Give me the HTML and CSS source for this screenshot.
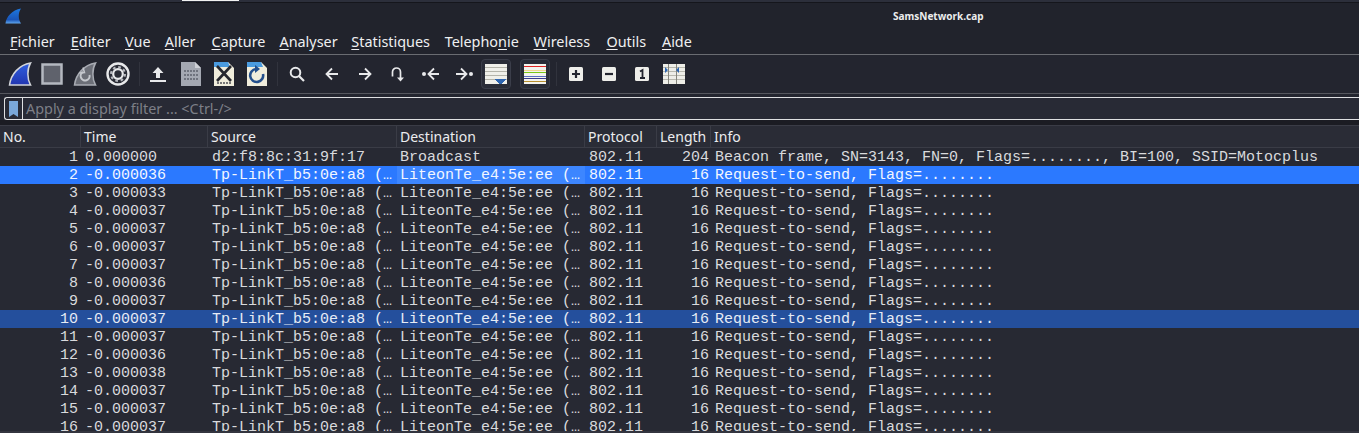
FILE: index.html
```html
<!DOCTYPE html>
<html lang="fr">
<head>
<meta charset="utf-8">
<title>SamsNetwork.cap</title>
<link rel="stylesheet" href="styles.css">
</head>
<body>
<div class="window">
  <div class="topstrip"><span class="topmark"></span></div>
  <header class="titlebar">
    <svg class="applogo" width="17" height="17" viewBox="0 0 17 17"><defs><linearGradient id="lg0" x1="0" y1="0" x2="0" y2="1"><stop offset="0" stop-color="#1d78e0"/><stop offset=".75" stop-color="#1a55b8"/><stop offset="1" stop-color="#62a8ee"/></linearGradient></defs><path d="M.5 15.500C1 9 7 2 16 .5c-3 4.500-3 10.500 0 15z" fill="url(#lg0)"/></svg>
    <span class="wintitle">SamsNetwork.cap</span>
  </header>
  <nav class="menubar">
    <span class="mi m1"><u>F</u>ichier</span>
    <span class="mi m2"><u>E</u>diter</span>
    <span class="mi m3"><u>V</u>ue</span>
    <span class="mi m4"><u>A</u>ller</span>
    <span class="mi m5"><u>C</u>apture</span>
    <span class="mi m6"><u>A</u>nalyser</span>
    <span class="mi m7"><u>S</u>tatistiques</span>
    <span class="mi m8">Telepho<u>n</u>ie</span>
    <span class="mi m9"><u>W</u>ireless</span>
    <span class="mi m10"><u>O</u>utils</span>
    <span class="mi m11"><u>A</u>ide</span>
  </nav>
  <div class="toolbar">
    <svg class="ic i1" width="24" height="26" viewBox="0 0 24 26"><defs><linearGradient id="lg1" x1="0" y1="0" x2="0" y2="1"><stop offset="0" stop-color="#2f5fe0"/><stop offset="1" stop-color="#2236b0"/></linearGradient></defs><path d="M1.500 24C3 13 11 4 22.500 2c-3.500 6-3.500 16 0 22z" fill="url(#lg1)" stroke="#d2d5da" stroke-width="1.500"/></svg>
    <svg class="ic i2" width="22" height="22" viewBox="0 0 22 22"><rect x="1.500" y="1.500" width="19" height="19" fill="#5f626c" stroke="#b4b8c0" stroke-width="2.500"/></svg>
    <svg class="ic i3" width="24" height="26" viewBox="0 0 24 26"><path d="M1.500 24C3 13 11 4 22.500 2c-3.500 6-3.500 16 0 22z" fill="#6c6f78" stroke="#a8abb3" stroke-width="1.500"/><path d="M16.500 14a4.500 4.500 0 1 1-6.500-3" fill="none" stroke="#c4c7cd" stroke-width="2"/><path d="M10 6.500l1.500 5-5 .5" fill="none" stroke="#c4c7cd" stroke-width="1.500"/></svg>
    <svg class="ic i4" width="24" height="24" viewBox="0 0 24 24"><circle cx="12" cy="12" r="10.500" fill="#2a2c36" stroke="#e8e9eb" stroke-width="2.400"/><circle cx="12" cy="12" r="7" fill="none" stroke="#b8bac0" stroke-width="2" stroke-dasharray="2.700 2.800"/><circle cx="12" cy="12" r="4.800" fill="none" stroke="#e8e9eb" stroke-width="2.200"/></svg>
    <i class="sep s1"></i>
    <svg class="ic i5" width="16" height="16" viewBox="0 0 16 16"><path d="M8 1l5.500 6H10v5H6V7H2.500zM0 14h16v2H0z" fill="#e8e9eb"/></svg>
    <svg class="ic i6" width="20" height="24" viewBox="0 0 20 24"><path d="M0 0h14l6 6v18H0z" fill="#a4a8b2"/><path d="M14 0l6 6h-6z" fill="#d0d2d8"/><path d="M3 9h14M3 13h14M3 17h14" stroke="#6f737e" stroke-width="2" stroke-dasharray="2 1"/></svg>
    <svg class="ic i7" width="20" height="24" viewBox="0 0 20 24"><path d="M0 0h14l6 6v18H0z" fill="#f0eddc"/><path d="M0 0h14l2 5H0z" fill="#4a9bdf"/><path d="M3 21h14" stroke="#777" stroke-width="2" stroke-dasharray="2 1"/><path d="M3 4l14 15M17 4L3 19" stroke="#26282f" stroke-width="2.600"/></svg>
    <svg class="ic i8" width="20" height="24" viewBox="0 0 20 24"><path d="M0 0h14l6 6v18H0z" fill="#f0eddc"/><path d="M0 0h14l2 5H0z" fill="#4a9bdf"/><path d="M9 7a6.500 6.500 0 1 0 7 5" fill="none" stroke="#234f8c" stroke-width="2.600"/><path d="M8 3v8l5-4z" fill="#234f8c"/></svg>
    <i class="sep s2"></i>
    <svg class="ic i9" width="16" height="16" viewBox="0 0 16 16"><circle cx="6.500" cy="6.500" r="4.800" fill="none" stroke="#e8e9eb" stroke-width="2"/><path d="M10 10l5 5" stroke="#e8e9eb" stroke-width="2.200"/></svg>
    <svg class="ic i10" width="14" height="14" viewBox="0 0 14 14"><path d="M13 7H2M7 1.500L1.500 7 7 12.500" fill="none" stroke="#e8e9eb" stroke-width="1.800"/></svg>
    <svg class="ic i11" width="14" height="14" viewBox="0 0 14 14"><path d="M1 7h11M7 1.500L12.500 7 7 12.500" fill="none" stroke="#e8e9eb" stroke-width="1.800"/></svg>
    <svg class="ic i12" width="13" height="15" viewBox="0 0 13 15"><path d="M1.500 9.500V5a4 4 0 0 1 8 0v6" fill="none" stroke="#e8e9eb" stroke-width="1.700"/><path d="M6 10.500h7L9.500 14.500z" fill="#e8e9eb"/></svg>
    <svg class="ic i13" width="18" height="14" viewBox="0 0 18 14"><circle cx="2" cy="7" r="2" fill="#e8e9eb"/><path d="M17 7H7M12 1.500L6.500 7l5.500 5.500" fill="none" stroke="#e8e9eb" stroke-width="1.800"/></svg>
    <svg class="ic i14" width="18" height="14" viewBox="0 0 18 14"><circle cx="16" cy="7" r="2" fill="#e8e9eb"/><path d="M1 7h10M6 1.500L11.500 7 6 12.500" fill="none" stroke="#e8e9eb" stroke-width="1.800"/></svg>
    <span class="toggle t1"><svg width="22" height="20" viewBox="0 0 22 20" shape-rendering="crispEdges"><rect width="22" height="20" fill="#f0f0ea"/><path d="M0 3.500h22M0 7.500h22M0 11.500h22M0 15.500h22" stroke="#b4b4aa" stroke-width="1"/><path d="M10 15h11v1l-5 4h-1l-5-4z" fill="#2f66b0"/></svg></span>
    <span class="toggle t2"><svg width="22" height="20" viewBox="0 0 22 20" shape-rendering="crispEdges"><rect width="22" height="20" fill="#f4f4ee"/><path d="M0 2.500h22" stroke="#e02525"/><path d="M0 6.500h22" stroke="#f0d890"/><path d="M0 8.500h22" stroke="#78c818"/><path d="M0 12.500h22" stroke="#5a70c0"/><path d="M0 14.500h22" stroke="#3a3a90"/><path d="M0 17.500h22" stroke="#b89030"/></svg></span>
    <i class="sep s3"></i>
    <svg class="ic i15" width="14" height="14" viewBox="0 0 14 14"><rect width="14" height="14" rx="1.500" fill="#eeeeea"/><path d="M3 7h8M7 3v8" stroke="#23252f" stroke-width="2.200"/></svg>
    <svg class="ic i16" width="14" height="14" viewBox="0 0 14 14"><rect width="14" height="14" rx="1.500" fill="#eeeeea"/><path d="M3 7h8" stroke="#23252f" stroke-width="2.200"/></svg>
    <svg class="ic i17" width="14" height="14" viewBox="0 0 14 14"><rect width="14" height="14" rx="1.500" fill="#eeeeea"/><path d="M5 4.500L7.500 3v8M5 11h5" fill="none" stroke="#23252f" stroke-width="1.800"/></svg>
    <svg class="ic i18" width="22" height="20" viewBox="0 0 22 20"><rect width="22" height="20" fill="#eeeee8"/><path d="M0 3.500h22M0 7.500h22M0 11.500h22M0 15.500h22" stroke="#b8b8ae" stroke-width="1"/><path d="M5.500 0v20M13.500 0v20" stroke="#85857d" stroke-width="1"/><path d="M2 3l3 3-3 3zM16 3l-3 3 3 3z" fill="#2f66b0"/></svg>
  </div>
  <div class="filterwrap">
    <div class="filter">
      <span class="bookmark"><svg width="9" height="16" viewBox="0 0 9 16"><path d="M0 0h9v16l-4.500-3L0 16z" fill="#7aa7d8"/></svg></span>
      <span class="filtertext">Apply a display filter ... &lt;Ctrl-/&gt;</span>
    </div>
  </div>
  <section class="packets">
    <div class="head">
      <span class="h cno">No.</span><span class="h">Time</span><span class="h">Source</span><span class="h">Destination</span><span class="h">Protocol</span><span class="h">Length</span><span class="h hlast">Info</span>
    </div>
    <div class="row"><span class="no">1</span><span>0.000000</span><span class="src">d2:f8:8c:31:9f:17</span><span class="dst">Broadcast</span><span class="pr">802.11</span><span class="len">204</span><span class="info">Beacon frame, SN=3143, FN=0, Flags=........, BI=100, SSID=Motocplus</span></div>
    <div class="row sel"><span class="no">2</span><span>-0.000036</span><span class="src">Tp-LinkT_b5:0e:a8 (…</span><span class="dst focus">LiteonTe_e4:5e:ee (…</span><span class="pr">802.11</span><span class="len">16</span><span class="info">Request-to-send, Flags=........</span></div>
    <div class="row"><span class="no">3</span><span>-0.000033</span><span class="src">Tp-LinkT_b5:0e:a8 (…</span><span class="dst">LiteonTe_e4:5e:ee (…</span><span class="pr">802.11</span><span class="len">16</span><span class="info">Request-to-send, Flags=........</span></div>
    <div class="row"><span class="no">4</span><span>-0.000037</span><span class="src">Tp-LinkT_b5:0e:a8 (…</span><span class="dst">LiteonTe_e4:5e:ee (…</span><span class="pr">802.11</span><span class="len">16</span><span class="info">Request-to-send, Flags=........</span></div>
    <div class="row"><span class="no">5</span><span>-0.000037</span><span class="src">Tp-LinkT_b5:0e:a8 (…</span><span class="dst">LiteonTe_e4:5e:ee (…</span><span class="pr">802.11</span><span class="len">16</span><span class="info">Request-to-send, Flags=........</span></div>
    <div class="row"><span class="no">6</span><span>-0.000037</span><span class="src">Tp-LinkT_b5:0e:a8 (…</span><span class="dst">LiteonTe_e4:5e:ee (…</span><span class="pr">802.11</span><span class="len">16</span><span class="info">Request-to-send, Flags=........</span></div>
    <div class="row"><span class="no">7</span><span>-0.000037</span><span class="src">Tp-LinkT_b5:0e:a8 (…</span><span class="dst">LiteonTe_e4:5e:ee (…</span><span class="pr">802.11</span><span class="len">16</span><span class="info">Request-to-send, Flags=........</span></div>
    <div class="row"><span class="no">8</span><span>-0.000036</span><span class="src">Tp-LinkT_b5:0e:a8 (…</span><span class="dst">LiteonTe_e4:5e:ee (…</span><span class="pr">802.11</span><span class="len">16</span><span class="info">Request-to-send, Flags=........</span></div>
    <div class="row"><span class="no">9</span><span>-0.000037</span><span class="src">Tp-LinkT_b5:0e:a8 (…</span><span class="dst">LiteonTe_e4:5e:ee (…</span><span class="pr">802.11</span><span class="len">16</span><span class="info">Request-to-send, Flags=........</span></div>
    <div class="row mark"><span class="no">10</span><span>-0.000037</span><span class="src">Tp-LinkT_b5:0e:a8 (…</span><span class="dst">LiteonTe_e4:5e:ee (…</span><span class="pr">802.11</span><span class="len">16</span><span class="info">Request-to-send, Flags=........</span></div>
    <div class="row"><span class="no">11</span><span>-0.000037</span><span class="src">Tp-LinkT_b5:0e:a8 (…</span><span class="dst">LiteonTe_e4:5e:ee (…</span><span class="pr">802.11</span><span class="len">16</span><span class="info">Request-to-send, Flags=........</span></div>
    <div class="row"><span class="no">12</span><span>-0.000036</span><span class="src">Tp-LinkT_b5:0e:a8 (…</span><span class="dst">LiteonTe_e4:5e:ee (…</span><span class="pr">802.11</span><span class="len">16</span><span class="info">Request-to-send, Flags=........</span></div>
    <div class="row"><span class="no">13</span><span>-0.000038</span><span class="src">Tp-LinkT_b5:0e:a8 (…</span><span class="dst">LiteonTe_e4:5e:ee (…</span><span class="pr">802.11</span><span class="len">16</span><span class="info">Request-to-send, Flags=........</span></div>
    <div class="row"><span class="no">14</span><span>-0.000037</span><span class="src">Tp-LinkT_b5:0e:a8 (…</span><span class="dst">LiteonTe_e4:5e:ee (…</span><span class="pr">802.11</span><span class="len">16</span><span class="info">Request-to-send, Flags=........</span></div>
    <div class="row"><span class="no">15</span><span>-0.000037</span><span class="src">Tp-LinkT_b5:0e:a8 (…</span><span class="dst">LiteonTe_e4:5e:ee (…</span><span class="pr">802.11</span><span class="len">16</span><span class="info">Request-to-send, Flags=........</span></div>
    <div class="row"><span class="no">16</span><span>-0.000037</span><span class="src">Tp-LinkT_b5:0e:a8 (…</span><span class="dst">LiteonTe_e4:5e:ee (…</span><span class="pr">802.11</span><span class="len">16</span><span class="info">Request-to-send, Flags=........</span></div>
  </section>
</div>
</body>
</html>
```
FILE: styles.css
```css
* { box-sizing: border-box; }
html, body { margin: 0; height: 433px; overflow: hidden; background: #262832; }
.window { height: 433px; overflow: hidden; display: flex; flex-direction: column; color: #e6e7ea; font-family: "Noto Sans", sans-serif; }

.topstrip { height: 3px; background: #2c2f3b; border-bottom: 1px solid #15161c; padding-left: 182px; flex: none; }
.topmark { display: block; width: 57px; height: 1px; background: #f2f2f2; }

.titlebar { height: 26px; flex: none; display: flex; align-items: center; padding: 0 5px; background: #21232c; position: relative; }
.applogo { flex: none; }
.wintitle { position: absolute; left: 893px; top: 7px; font-size: 10px; line-height: 13px; font-weight: 700; font-family: "Noto Sans", sans-serif; color: #eceded; }

.menubar { height: 26px; flex: none; display: flex; align-items: center; background: #21232c; border-bottom: 1px solid #6a6c72; font-size: 14.4px; color: #eff0f1; padding-left: 10px; padding-bottom: 1px; }
.mi u { text-underline-offset: 2px; text-decoration-thickness: 1px; }
.m2 { margin-left: 16px; }
.m3 { margin-left: 14.400px; }
.m4 { margin-left: 14.300px; }
.m5 { margin-left: 16px; }
.m6 { margin-left: 14px; }
.m7 { margin-left: 13.700px; }
.m8 { margin-left: 14.700px; }
.m9 { margin-left: 14.800px; }
.m10 { margin-left: 16.300px; }
.m11 { margin-left: 15.900px; }

.toolbar { height: 39px; flex: none; display: flex; align-items: center; background: #23252f; border-bottom: 1px solid #55575e; }
.ic { flex: none; display: block; }
.i1 { margin-left: 8px; }
.i2 { margin-left: 9px; }
.i3 { margin-left: 10px; }
.i4 { margin-left: 9px; }
.sep { flex: none; width: 1px; height: 24px; background: #31333d; }
.s1 { margin-left: 9px; }
.i5 { margin-left: 10px; }
.i6 { margin-left: 15px; }
.i7 { margin-left: 13px; }
.i8 { margin-left: 13px; }
.s2 { margin-left: 10px; }
.i9 { margin-left: 11px; }
.i10 { margin-left: 20px; }
.i11 { margin-left: 19px; }
.i12 { margin-left: 19px; }
.i13 { margin-left: 18px; }
.i14 { margin-left: 15px; }
.toggle { flex: none; display: flex; align-items: center; justify-content: center; width: 30px; height: 30px; background: #2a2d38; border: 1px solid #3b3e4a; border-radius: 4px; }
.t1 { margin-left: 8px; }
.t2 { margin-left: 9px; }
.s3 { margin-left: 6px; }
.i15 { margin-left: 12px; }
.i16 { margin-left: 19px; }
.i17 { margin-left: 19px; }
.i18 { margin-left: 14px; }

.filterwrap { flex: none; height: 31px; padding: 3px 0 0 4px; background: #23252f; border-bottom: 5px solid #1b1c23; }
.filter { height: 23px; display: flex; align-items: center; background: #282a35; border: 1px solid #dfe0e2; border-right: none; border-radius: 3px 0 0 3px; }
.bookmark { flex: none; width: 18px; height: 21px; display: flex; align-items: center; justify-content: center; border-right: 1px solid #dfe0e2; }
.filtertext { margin-left: 3px; font-size: 14.4px; color: #7d7f87; white-space: nowrap; }

.packets { flex: 1; min-height: 0; background: #272933; overflow: hidden; border-bottom: 2px solid #33353f; }
.head, .row { display: grid; grid-template-columns: 81px 127px 189px 188px 72px 54px 1fr; }
.head { height: 23px; background: #2a2c36; border-top: 1px solid #3a3c46; border-bottom: 1px solid #3a3c46; font-size: 14px; color: #ecedef; }
.h { padding-left: 3px; line-height: 21px; border-right: 1px solid #3a3c46; white-space: nowrap; }
.hlast { border-right: none; }
.row { height: 18px; line-height: 20px; font-family: "Liberation Mono", monospace; font-size: 15px; color: #d9dadd; white-space: pre; }
.row span { padding-left: 4px; overflow: hidden; }
.row .no { padding: 0 3px 0 0; text-align: right; }
.row .len { padding: 0 2px 0 0; text-align: right; }
.row .dst { padding-left: 3px; }
.row .pr { padding-left: 4px; }
.sel { background: #2b79ff; color: #f2f6ff; }
.sel .focus { background: #3d86ff; }
.mark { background: #244f9c; color: #e6ebf5; }
```
